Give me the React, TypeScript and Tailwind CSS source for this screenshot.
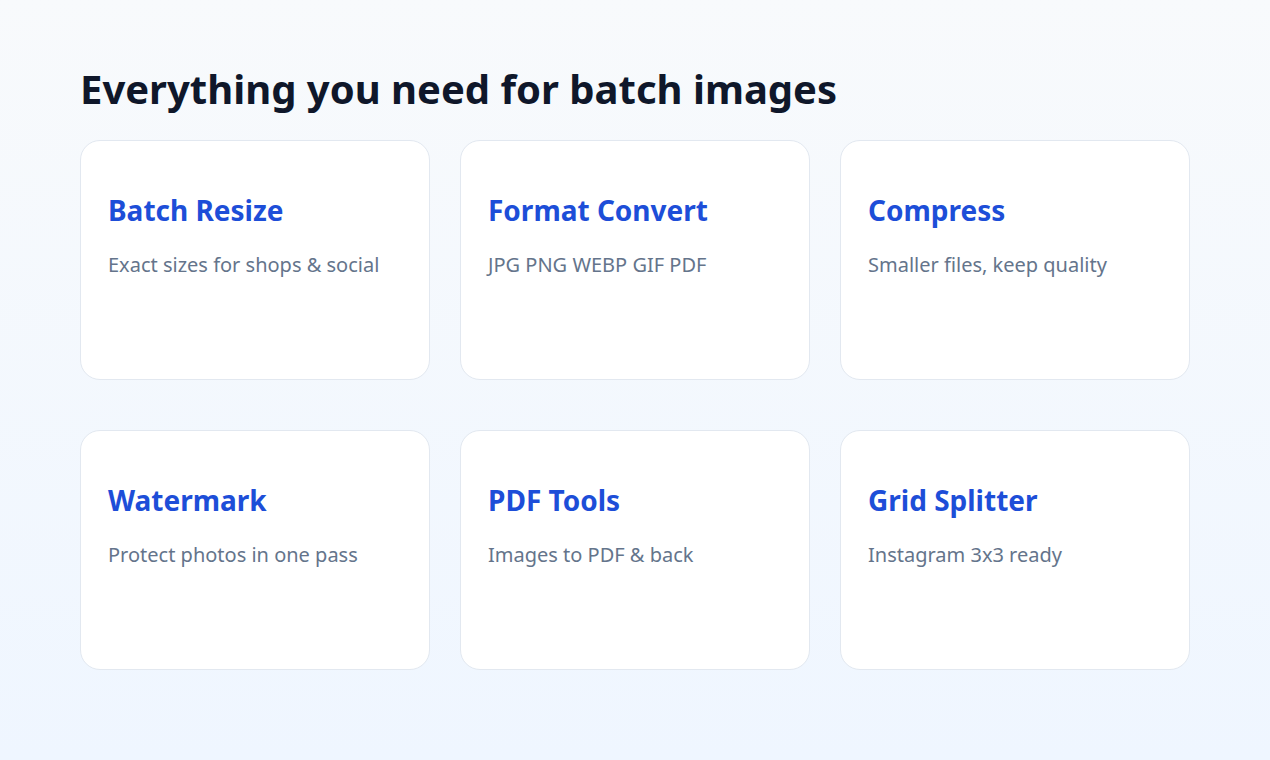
const features = [
  { title: 'Batch Resize', desc: 'Exact sizes for shops & social' },
  { title: 'Format Convert', desc: 'JPG PNG WEBP GIF PDF' },
  { title: 'Compress', desc: 'Smaller files, keep quality' },
  { title: 'Watermark', desc: 'Protect photos in one pass' },
  { title: 'PDF Tools', desc: 'Images to PDF & back' },
  { title: 'Grid Splitter', desc: 'Instagram 3x3 ready' },
];

export default function App() {
  return (
    <div className="min-h-[760px] w-full bg-gradient-to-b from-[#f8fafc] to-[#eff6ff] px-[80px] pt-[65px] font-['Noto_Sans',sans-serif]">
      <h1 className="text-[40px] font-bold leading-[48px] text-[#0f172a]">
        Everything you need for batch images
      </h1>

      <div className="mt-[27px] grid w-[1110px] grid-cols-3 gap-x-[30px] gap-y-[50px]">
        {features.map((f) => (
          <div
            key={f.title}
            className="h-[240px] rounded-[20px] border border-[#e2e8f0] bg-white px-[27px] pt-[52px]"
          >
            <h3 className="text-[28px] font-bold leading-[34px] text-[#1d4ed8]">{f.title}</h3>
            <p className="mt-[23px] text-[20px] leading-[30px] text-[#64748b]">{f.desc}</p>
          </div>
        ))}
      </div>
    </div>
  );
}
